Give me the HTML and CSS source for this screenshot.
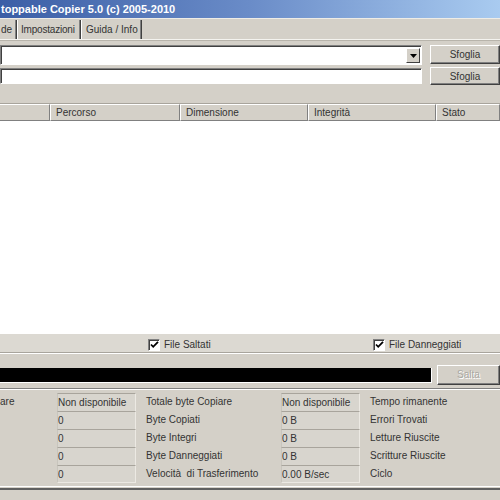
FILE: index.html
```html
<!DOCTYPE html>
<html>
<head>
<meta charset="utf-8">
<link rel="stylesheet" href="styles.css">
</head>
<body>
<div class="win">
  <div class="titlebar">toppable Copier 5.0 (c) 2005-2010</div>
  <div class="tabs">
    <div class="tab t1">de</div>
    <div class="tab t2">Impostazioni</div>
    <div class="tab t3">Guida / Info</div>
  </div>
  <div class="paths">
    <div class="field combo"><span class="drop"><svg width="7" height="4" viewBox="0 0 7 4"><path d="M0 0h7L3.5 4z" fill="#000"/></svg></span></div>
    <div class="btn">Sfoglia</div>
    <div class="field plain"></div>
    <div class="btn">Sfoglia</div>
  </div>
  <div class="list">
    <div class="head">
      <div class="hc c0"></div>
      <div class="hc c1">Percorso</div>
      <div class="hc c2">Dimensione</div>
      <div class="hc c3">Integrità</div>
      <div class="hc c4">Stato</div>
    </div>
    <div class="rows"></div>
  </div>
  <div class="checks">
    <label class="chk c-salt"><span class="box"><svg width="9" height="9" viewBox="0 0 9 9"><path d="M1 4.5l2.2 2.3L8 1.8" fill="none" stroke="#000" stroke-width="1.8"/></svg></span>File Saltati</label>
    <label class="chk c-dann"><span class="box"><svg width="9" height="9" viewBox="0 0 9 9"><path d="M1 4.5l2.2 2.3L8 1.8" fill="none" stroke="#000" stroke-width="1.8"/></svg></span>File Danneggiati</label>
  </div>
  <div class="progress">
    <div class="bar"></div>
    <div class="btn disabled">Salta</div>
  </div>
  <div class="stats">
    <div class="lab">are</div><div class="val">Non disponibile</div><div class="lab2">Totale byte Copiare</div><div class="val">Non disponibile</div><div class="lab3">Tempo rimanente</div>
    <div class="lab"></div><div class="val">0</div><div class="lab2">Byte Copiati</div><div class="val">0 B</div><div class="lab3">Errori Trovati</div>
    <div class="lab"></div><div class="val">0</div><div class="lab2">Byte Integri</div><div class="val">0 B</div><div class="lab3">Letture Riuscite</div>
    <div class="lab"></div><div class="val">0</div><div class="lab2">Byte Danneggiati</div><div class="val">0 B</div><div class="lab3">Scritture Riuscite</div>
    <div class="lab"></div><div class="val">0</div><div class="lab2">Velocità&nbsp; di Trasferimento</div><div class="val">0.00 B/sec</div><div class="lab3">Ciclo</div>
  </div>
  <div class="bottom"></div>
</div>
</body>
</html>
```
FILE: styles.css
```css
html, body {
  margin: 0;
  padding: 0;
  background: #d4d0c8;
}
body {
  font-family: "Liberation Sans", Arial, sans-serif;
  font-size: 10px;
  color: #222;
  width: 500px;
  height: 500px;
  overflow: hidden;
}
.win {
  display: flex;
  flex-direction: column;
  width: 500px;
}
.titlebar {
  height: 18px;
  line-height: 18px;
  background: linear-gradient(to right, #3b5ea6 0%, #6a8cc8 50%, #a9cbf0 100%);
  color: #fff;
  font-weight: bold;
  font-size: 11px;
  white-space: nowrap;
  padding-left: 1px;
  border-bottom: 1px solid #eeece6;
}
.tabs {
  display: flex;
  height: 19px;
  margin-top: 1px;
  border-bottom: 1px solid #f4f3ef;
  box-shadow: 0 1px 0 #b8b4ab;
}
.tab {
  line-height: 19px;
  box-sizing: border-box;
  padding-left: 5px;
  border-right: 1px solid #808080;
  box-shadow: 1px 0 0 #404040, inset 1px 0 0 #fff;
  margin-right: 1px;
  color: #333;
  white-space: nowrap;
}
.t1 { width: 16px; padding-left: 1px; box-shadow: 1px 0 0 #404040; }
.t2 { width: 63px; padding-left: 4px; letter-spacing: -0.2px; }
.t3 { width: 60px; }
.paths {
  display: grid;
  grid-template-columns: 422px 70px;
  column-gap: 8px;
  row-gap: 2px;
  margin-top: 5px;
}
.field {
  background: #fff;
  border-top: 1px solid #808080;
  border-left: 1px solid #808080;
  border-bottom: 1px solid #fff;
  border-right: 1px solid #fff;
  box-shadow: inset 1px 1px 0 #404040;
  box-sizing: border-box;
}
.combo {
  height: 20px;
  display: flex;
  justify-content: flex-end;
  padding: 2px 1px 1px 0;
}
.drop {
  width: 14px;
  background: #d4d0c8;
  border-top: 1px solid #fff;
  border-left: 1px solid #fff;
  border-right: 1px solid #404040;
  border-bottom: 1px solid #404040;
  box-sizing: border-box;
  display: flex;
  align-items: center;
  justify-content: center;
}
.plain {
  height: 16px;
  margin-top: 1px;
}
.btn {
  background: #d4d0c8;
  border-top: 1px solid #fff;
  border-left: 1px solid #fff;
  border-right: 1px solid #404040;
  border-bottom: 1px solid #404040;
  box-shadow: inset -1px -1px 0 #808080;
  box-sizing: border-box;
  text-align: center;
  color: #333;
  height: 19px;
  line-height: 17px;
}
.paths .btn:nth-child(4) {
  height: 18px;
}
.list {
  margin-top: 18px;
  display: flex;
  flex-direction: column;
}
.head {
  display: grid;
  grid-template-columns: 50px 130px 128px 128px 64px;
  height: 17px;
  background: #d4d0c8;
  border-top: 1px solid #a8a49c;
}
.hc {
  box-sizing: border-box;
  border-top: 1px solid #fff;
  border-left: 1px solid #fff;
  border-right: 1px solid #808080;
  border-bottom: 1px solid #808080;
  padding-left: 5px;
  line-height: 15px;
  color: #333;
  white-space: nowrap;
}
.hc.c0 { border-left: none; }
.rows {
  background: #fff;
  height: 213px;
}
.checks {
  height: 18px;
  position: relative;
  border-bottom: 1px solid #a8a49c;
  box-shadow: 0 1px 0 #fff;
  background: #dcd9d2;
}
.chk {
  position: absolute;
  top: 4px;
  display: flex;
  align-items: center;
  gap: 4px;
  color: #333;
  line-height: 13px;
}
.c-salt { left: 148px; }
.c-dann { left: 373px; }
.box {
  width: 12px;
  height: 12px;
  box-sizing: border-box;
  background: #fff;
  border-top: 1px solid #808080;
  border-left: 1px solid #808080;
  border-right: 1px solid #fff;
  border-bottom: 1px solid #fff;
  box-shadow: inset 1px 1px 0 #404040;
  display: flex;
  align-items: center;
  justify-content: center;
}
.progress {
  display: flex;
  align-items: center;
  gap: 5px;
  margin-top: 12px;
  height: 20px;
}
.bar {
  width: 432px;
  height: 15px;
  box-sizing: border-box;
  background: #000;
  border-bottom: 1px solid #fff;
  border-right: 1px solid #fff;
}
.btn.disabled {
  flex: 1;
  height: 20px;
  line-height: 18px;
  color: #aaa8a2;
  text-shadow: 1px 1px 0 #fff;
}
.stats {
  margin-top: 3px;
  border-top: 1px solid #808080;
  box-shadow: inset 0 1px 0 #fff;
  padding-top: 4px;
  display: grid;
  grid-template-columns: 57px 79px 145px 79px 1fr;
  grid-auto-rows: 18px;
}
.lab, .lab2, .lab3 {
  line-height: 18px;
  white-space: nowrap;
  overflow: hidden;
  color: #333;
}
.lab2 { padding-left: 10px; }
.lab3 { padding-left: 10px; }
.val {
  line-height: 17px;
  border-top: 1px solid #a8a49c;
  background: #d8d5ce;
  border-left: 1px solid #c8c5bd;
  border-right: 1px solid #ece9e3;
  white-space: nowrap;
  overflow: hidden;
  color: #333;
}
.stats .val:nth-last-child(2), .stats .val:nth-last-child(4) {
  border-bottom: 1px solid #ece9e3;
}
.bottom {
  margin-top: 3px;
  border-top: 1px solid #fff;
  border-bottom: 2px solid #606060;
  box-sizing: border-box;
  height: 4px;
}
```
